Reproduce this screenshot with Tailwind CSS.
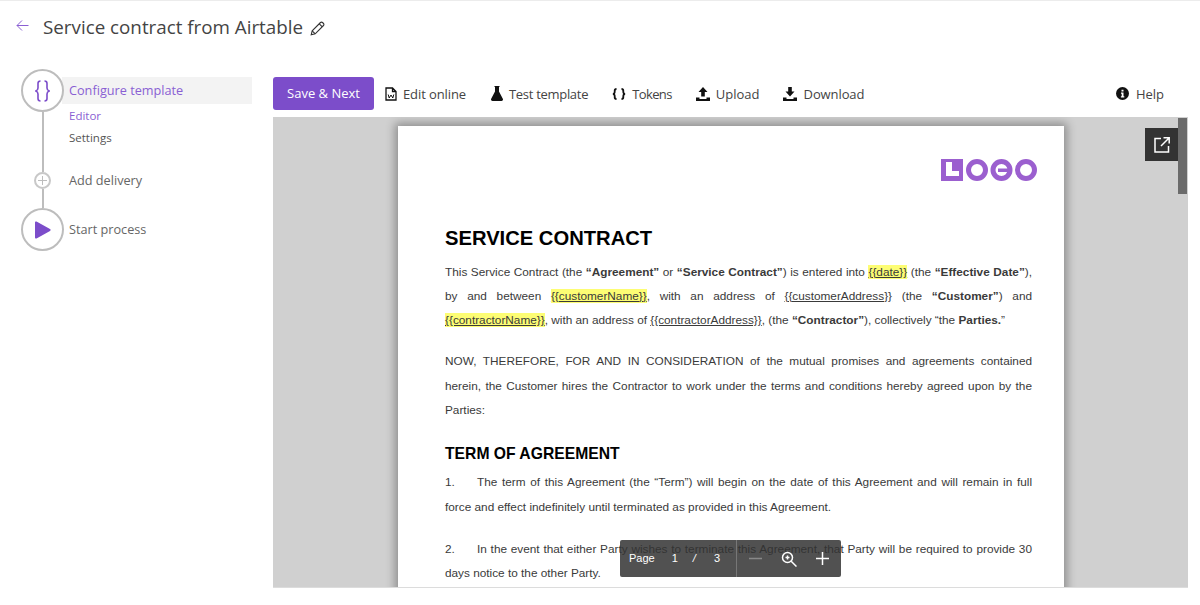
<!DOCTYPE html>
<html lang="en">
<head>
  <meta charset="UTF-8" />
  <title>Service contract from Airtable</title>
  <script src="https://cdn.jsdelivr.net/npm/@tailwindcss/browser@4"></script>
</head>
<body class="bg-white font-['Open_Sans',sans-serif] text-[#4a4a4a] overflow-hidden">
  <div class="w-[1200px] h-[605px] border-t border-[#ececec] overflow-hidden">

    <!-- Header -->
    <header class="flex items-center h-[52px] pl-[16px]">
      <svg class="w-[13px] h-[13px] mt-[-3px]" viewBox="0 0 13 13" fill="none" stroke="#8a5fd3" stroke-width="1"><path d="M12.5 6.5H1M6 1.500l-5 5 5 5"/></svg>
      <h1 class="ml-[14px] text-[18.800px] text-[#444]">Service contract from Airtable</h1>
      <svg class="ml-[7px] mt-[3px] w-[15px] h-[15px]" viewBox="0 0 15 15" fill="none" stroke="#333" stroke-width="1.100"><path d="M1.200 13.800l1-4L10.500 1.500a1.400 1.400 0 0 1 2 0l1 1a1.400 1.400 0 0 1 0 2L5.200 12.800z"/><path d="M2.200 9.800l3 3M9.300 2.800l3 3"/></svg>
    </header>

    <div class="flex mt-[24px]">
      <!-- Stepper -->
      <aside class="w-[273px] shrink-0 flex pl-[21px]">
        <div class="w-[43px] shrink-0 flex flex-col items-center mt-[-8px] z-10">
          <div class="w-[43px] h-[43px] rounded-full border-2 border-[#bdbdbd] bg-white flex items-center justify-center">
            <svg class="w-[15px] h-[22px]" viewBox="0 0 15 22" fill="none" stroke="#7c4dca" stroke-width="1.600"><path d="M5.500 1C3.500 1 3 2 3 3.500V8c0 1.500-.7 2.500-2.200 3C2.300 11.500 3 12.500 3 14v4.500C3 20 3.500 21 5.500 21M9.500 1c2 0 2.500 1 2.500 2.500V8c0 1.500.7 2.500 2.200 3-1.500.5-2.200 1.500-2.200 3v4.500c0 1.500-.5 2.500-2.500 2.500"/></svg>
          </div>
          <div class="w-[2px] h-[60px] bg-[#bdbdbd]"></div>
          <div class="w-[17px] h-[17px] rounded-full border-2 border-[#c8c8c8] flex items-center justify-center">
            <svg class="w-[9px] h-[9px]" viewBox="0 0 9 9" stroke="#bdbdbd" stroke-width="1"><path d="M4.500 0v9M0 4.500h9"/></svg>
          </div>
          <div class="w-[2px] h-[19px] bg-[#bdbdbd]"></div>
          <div class="w-[43px] h-[43px] rounded-full border-2 border-[#bdbdbd] bg-white flex items-center justify-center">
            <svg class="w-[17px] h-[18px]" viewBox="0 0 17 18" fill="#7c4dca"><path d="M1 1.500a1 1 0 0 1 1.500-.9l13.500 7.500a1 1 0 0 1 0 1.800L2.500 17.400A1 1 0 0 1 1 16.500z"/></svg>
          </div>
        </div>
        <div class="flex-1 mr-[21px] ml-[-2px] text-[12.700px]">
          <div class="h-[27px] bg-[#f3f3f3] flex items-center pl-[7px] text-[#8a5fd3]">Configure template</div>
          <div class="pl-[7px] mt-[1px] text-[11.500px] text-[#8a5fd3] h-[22px] leading-[22px]">Editor</div>
          <div class="pl-[7px] text-[11.500px] text-[#555] h-[22px] leading-[22px]">Settings</div>
          <div class="pl-[7px] mt-[20px] h-[22px] leading-[22px] text-[#666]">Add delivery</div>
          <div class="pl-[7px] mt-[27px] h-[22px] leading-[22px] text-[#666]">Start process</div>
        </div>
      </aside>

      <!-- Main -->
      <main class="w-[915px] shrink-0">
        <div class="flex items-center h-[33px] text-[13px] text-[#444]">
          <button class="w-[101px] h-[33px] rounded-[3px] bg-[#7c4dca] text-white">Save &amp; Next</button>
          <div class="ml-[11px] flex items-center gap-[6px]">
            <svg class="w-[12px] h-[14px]" viewBox="0 0 12 14" fill="none" stroke="#111" stroke-width="1.300"><path d="M1 1h6.500L11 4.500V13H1zM7.500 1v3.500H11"/><path d="M3.200 7.500l1 3.500 1.800-3 1.800 3 1-3.500" stroke-width="1"/></svg>
            <span class="mt-[2px] tracking-[-0.1px]">Edit online</span>
          </div>
          <div class="ml-[25px] flex items-center gap-[6px]">
            <svg class="w-[12px] h-[15px]" viewBox="0 0 12 15" fill="#111"><path d="M3.500 0h5v1H8v4.500l3.800 7.300A1.500 1.500 0 0 1 10.500 15h-9A1.500 1.500 0 0 1 .2 12.800L4 5.500V1h-.5z"/></svg>
            <span class="mt-[2px] tracking-[-0.3px]">Test template</span>
          </div>
          <div class="ml-[24px] flex items-center gap-[6px]">
            <svg class="w-[14px] h-[12px]" viewBox="0 0 14 12" fill="none" stroke="#111" stroke-width="1.800"><path d="M4.500 1C3 1 2.700 1.700 2.700 2.700v1.600C2.700 5.200 2.200 5.800 1 6c1.200.2 1.700.8 1.700 1.700v1.600c0 1 .3 1.700 1.800 1.700M9.500 1c1.500 0 1.800.7 1.800 1.700v1.600c0 .9.500 1.500 1.700 1.700-1.200.2-1.700.8-1.700 1.700v1.600c0 1-.3 1.700-1.800 1.700"/></svg>
            <span class="mt-[2px] tracking-[-0.6px]">Tokens</span>
          </div>
          <div class="ml-[24px] flex items-center gap-[6px]">
            <svg class="w-[14px] h-[14px]" viewBox="0 0 14 14" fill="#111"><path d="M7 0l4.500 5H8.800v4.500H5.200V5H2.500zM0 10.500h3.500V12h7v-1.500H14V14H0z"/></svg>
            <span class="mt-[2px]">Upload</span>
          </div>
          <div class="ml-[23px] flex items-center gap-[7px]">
            <svg class="w-[14px] h-[14px]" viewBox="0 0 14 14" fill="#111"><path d="M5.200 0h3.600v4.500h2.700L7 9.500 2.500 4.500h2.700zM0 10.500h3.500V12h7v-1.500H14V14H0z"/></svg>
            <span class="mt-[2px] tracking-[-0.1px]">Download</span>
          </div>
          <div class="ml-auto mr-[24px] flex items-center gap-[7px]">
            <svg class="w-[13px] h-[13px]" viewBox="0 0 13 13"><circle cx="6.500" cy="6.500" r="6.500" fill="#111"/><path d="M5.500 2.700h2v1.800h-2zM5 5.500h2.500v3.700h.8v1.200H4.900V9.200h.8V6.700H5z" fill="#fff"/></svg>
            <span class="mt-[2px]">Help</span>
          </div>
        </div>

        <!-- PDF viewer -->
        <div class="relative mt-[7px] h-[471px] bg-[#d0d0d0] border-b border-[#dcdcdc] overflow-hidden">
          <div class="ml-[125px] mt-[9px] w-[666px] h-[600px] bg-white shadow-[0_0_9px_3px_rgba(0,0,0,0.32)] pl-[47px] pr-[32px] font-['Liberation_Sans',sans-serif] text-[11.800px] text-[#3a3a3a] leading-[24.400px]">
            <div class="flex justify-end pt-[33px] -mr-[5px]">
              <svg class="w-[96px] h-[22px] block" viewBox="0 0 96 22" fill="#9b5fcf">
                <path fill-rule="evenodd" d="M0 0h22v22H0zM5 3v14h13v-5h-7V3z"/>
                <circle cx="36" cy="11" r="8.500" fill="none" stroke="#9b5fcf" stroke-width="5"/>
                <circle cx="60.500" cy="11" r="8.500" fill="none" stroke="#9b5fcf" stroke-width="5"/>
                <path d="M57 9.500h12v3.500H57z"/>
                <circle cx="85" cy="11" r="8.500" fill="none" stroke="#9b5fcf" stroke-width="5"/>
              </svg>
            </div>
            <h2 class="mt-[45px] text-[20.200px] leading-[24px] font-bold text-black">SERVICE CONTRACT</h2>
            <div class="mt-[9.500px]">
              <div class="[text-align-last:justify]">This Service Contract (the <b>“Agreement”</b> or <b>“Service Contract”</b>) is entered into <u class="bg-[#fdfd74]">{{date}}</u> (the <b>“Effective Date”</b>),</div>
              <div class="[text-align-last:justify]">by and between <u class="bg-[#fdfd74]">{{customerName}}</u>, with an address of <u>{{customerAddress}}</u> (the <b>“Customer”</b>) and</div>
              <div><u class="bg-[#fdfd74]">{{contractorName}}</u>, with an address of <u>{{contractorAddress}}</u>, (the <b>“Contractor”</b>), collectively “the <b>Parties.</b>”</div>
            </div>
            <div class="mt-[16.500px]">
              <div class="[text-align-last:justify]">NOW, THEREFORE, FOR AND IN CONSIDERATION of the mutual promises and agreements contained</div>
              <div class="[text-align-last:justify]">herein, the Customer hires the Contractor to work under the terms and conditions hereby agreed upon by the</div>
              <div>Parties:</div>
            </div>
            <h3 class="mt-[20px] text-[15.700px] leading-[24px] font-bold text-black">TERM OF AGREEMENT</h3>
            <div class="mt-[4px]">
              <div class="flex"><span class="w-[32px] shrink-0">1.</span><span class="flex-1 [text-align-last:justify]">The term of this Agreement (the “Term”) will begin on the date of this Agreement and will remain in full</span></div>
              <div>force and effect indefinitely until terminated as provided in this Agreement.</div>
            </div>
            <div class="mt-[17.500px]">
              <div class="flex"><span class="w-[32px] shrink-0">2.</span><span class="flex-1 [text-align-last:justify]">In the event that either Party wishes to terminate this Agreement, that Party will be required to provide 30</span></div>
              <div>days notice to the other Party.</div>
            </div>
          </div>

          <!-- open in new window -->
          <div class="absolute left-[872px] top-[11px] w-[33px] h-[33px] bg-[#333] flex items-center justify-center">
            <svg class="w-[16px] h-[16px]" viewBox="0 0 16 16" fill="none" stroke="#fff" stroke-width="1.500"><path d="M7 1.500H1v13.500h13.500V9M9.500.8h5.700v5.700M15 1 7 9"/></svg>
          </div>
          <div class="absolute left-[905px] top-[1px] w-[9px] h-[76px] bg-[#6b6b6b]"></div>

          <!-- page controls -->
          <div class="absolute left-[347px] top-[423px] w-[221px] h-[37px] rounded-[2px] bg-[#333]/85 flex items-center text-white font-['Liberation_Sans',sans-serif] text-[11px]">
            <div class="w-[117px] h-full flex items-center border-r border-[#777] pl-[9px]">
              <span>Page</span>
              <span class="ml-[17px]">1</span>
              <span class="ml-[15px] italic">/</span>
              <span class="ml-[18px]">3</span>
            </div>
            <svg class="ml-[12px] w-[13px] h-[13px]" viewBox="0 0 13 13" stroke="#888" stroke-width="1.500"><path d="M0 6.500h13"/></svg>
            <svg class="ml-[19px] w-[16px] h-[16px]" viewBox="0 0 16 16" fill="none" stroke="#fff" stroke-width="1.500"><circle cx="6.500" cy="6.500" r="5"/><path d="M10.200 10.200 15.500 15.500M4.500 6.500h4M6.500 4.500v4"/></svg>
            <svg class="ml-[19px] w-[13px] h-[13px]" viewBox="0 0 13 13" stroke="#fff" stroke-width="1.500"><path d="M0 6.500h13M6.500 0v13"/></svg>
          </div>
        </div>
      </main>
    </div>
  </div>
</body>
</html>
